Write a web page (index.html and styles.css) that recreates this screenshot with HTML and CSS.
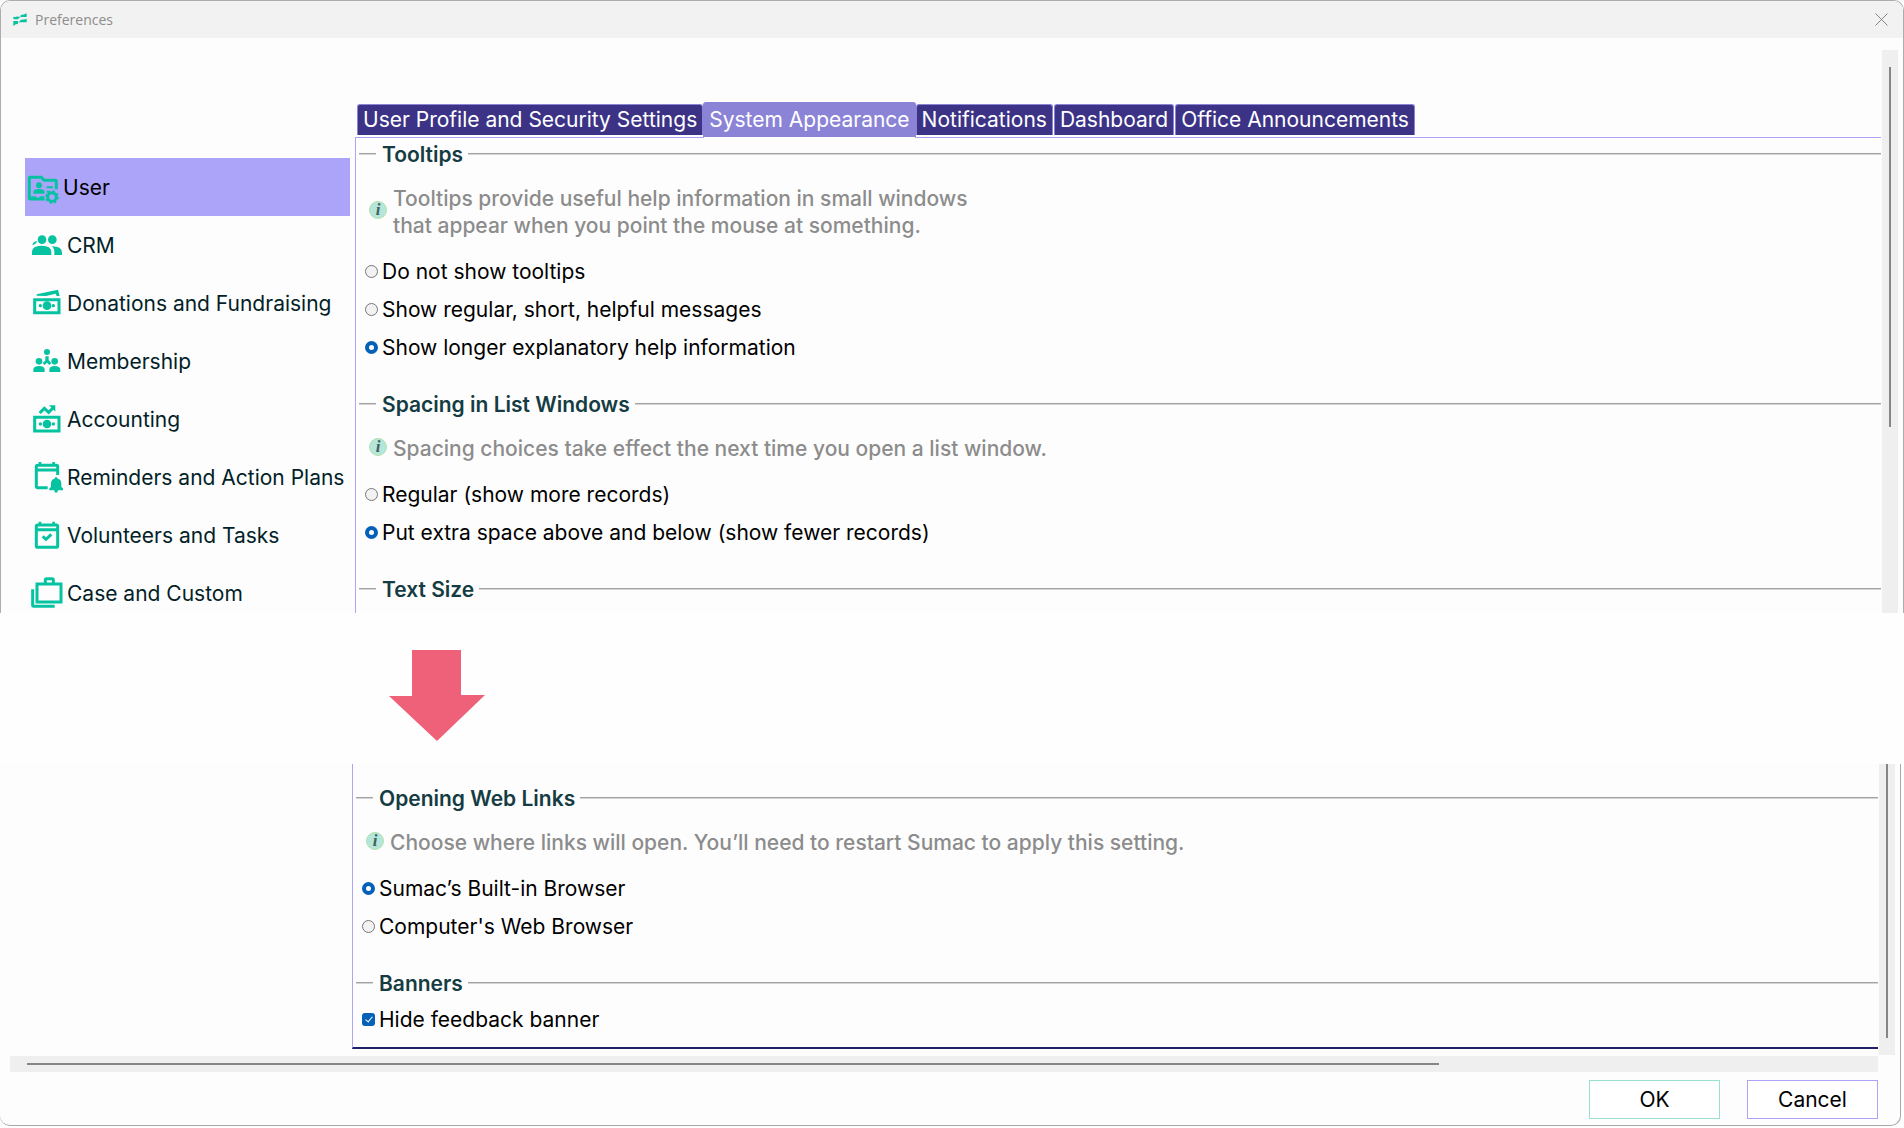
FILE: index.html
```html
<!DOCTYPE html>
<html lang="en">
<head>
<meta charset="utf-8">
<title>Preferences</title>
<link rel="stylesheet" href="styles.css">
</head>
<body>
<section class="window window-top">
  <header class="titlebar">
    <svg class="logo" viewBox="0 0 42 39" aria-hidden="true"><path d="M1 11Q8 13 15 10V19H4Q1 19 1 16ZM23 6Q33 6 41 1V12H23ZM15 11H24V12Q18 14 15 18ZM1 24H15V32Q6 33 1 39ZM23 20Q33 21 41 17V28H23ZM15 28Q20 26 23 21V28Z"/></svg>
    <h1 class="title">Preferences</h1>
    <button class="close" type="button" aria-label="Close"><svg viewBox="0 0 13 13"><path d="M.5.5l12 12M12.5.5l-12 12"/></svg></button>
  </header>
  <div class="content">
    <nav class="sidebar">
      <a class="nav-item selected" href="#user">
        <svg class="icon" viewBox="0 0 96 96"><path class="line" d="M53 84H10Q7 84 7 81V22Q7 19 10 19H43L51 28H85Q88 28 88 31V55M17 80h6v4h-6zM42 80h5v4h-5z"/><circle cx="36" cy="43" r="9"/><path d="M19 68V63Q19 54 36 54T53 63V68ZM59 46H78V52H59ZM59 59H65V65H59Z"/><circle class="gear" cx="75" cy="78" r="18"/><circle class="line" cx="75" cy="78" r="13"/></svg>
        User</a>
      <a class="nav-item" href="#crm">
        <svg class="icon" viewBox="0 0 96 96"><circle cx="33" cy="32" r="13"/><circle cx="64" cy="32" r="13"/><path d="M3 78V68Q3 50 32 50T61 68V78ZM63 52Q93 52 93 71V78H70V68Q70 58 63 52ZM4 49Q5 38 18 36Q17 43 11 46Z"/></svg>
        CRM</a>
      <a class="nav-item" href="#donations">
        <svg class="icon" viewBox="0 0 96 96"><path class="line" d="M11 38H84V77H11Z"/><circle cx="48" cy="56" r="13"/><circle cx="28" cy="56" r="5"/><circle cx="67" cy="56" r="5"/><path d="M17 26V22L81 8L86 27H77L74 20L45 27Z"/></svg>
        Donations and Fundraising</a>
      <a class="nav-item" href="#membership">
        <svg class="icon" viewBox="0 0 96 96"><circle cx="48" cy="21" r="9"/><circle cx="24" cy="49" r="10"/><circle cx="71" cy="49" r="10"/><path d="M7 81V74Q7 63 24 63T41 74V81ZM55 81V74Q55 63 71 63T88 74V81ZM43 34H53V45L61 55L55 60L48 53L41 60L35 55L43 46Z"/></svg>
        Membership</a>
      <a class="nav-item" href="#accounting">
        <svg class="icon" viewBox="0 0 96 96"><path class="line" d="M11 43H84V84H11Z"/><circle cx="48" cy="63" r="13"/><circle cx="28" cy="63" r="5"/><circle cx="67" cy="63" r="5"/><path class="line" d="M26 30L40 16L53 28L66 15"/><path d="M54 7H73V26Z"/></svg>
        Accounting</a>
      <a class="nav-item" href="#reminders">
        <svg class="icon" viewBox="0 0 96 96"><path class="line" d="M50 80H20Q16 80 16 76V17Q16 13 20 13H76Q80 13 80 17V42M16 27H80"/><path d="M23 3H31V14H23ZM64 3H72V14H64ZM55 88V82L60 78V68Q60 55 71 53Q71 48 75 48T80 53Q91 55 91 68V78L96 82V88H81Q80 96 75 96T70 88Z"/></svg>
        Reminders and Action Plans</a>
      <a class="nav-item" href="#volunteers">
        <svg class="icon" viewBox="0 0 96 96"><rect class="line" x="16" y="18" width="64" height="67" rx="4"/><path class="line" d="M16 32H80M35 52L45 61L61 46"/><path d="M23 8H31V18H23ZM64 8H72V18H64Z"/></svg>
        Volunteers and Tasks</a>
      <a class="nav-item" href="#case">
        <svg class="icon" viewBox="0 0 96 96"><path class="line" d="M18 21H90V75H18ZM5 37V85Q5 88 8 88H71M43 20V8Q43 5 47 5H63Q67 5 67 8V20"/></svg>
        Case and Custom</a>
    </nav>
    <main class="main">
      <div class="tabs" role="tablist">
        <button class="tab" role="tab" type="button">User Profile and Security Settings</button>
        <button class="tab active" role="tab" type="button" aria-selected="true">System Appearance</button>
        <button class="tab" role="tab" type="button">Notifications</button>
        <button class="tab" role="tab" type="button">Dashboard</button>
        <button class="tab" role="tab" type="button">Office Announcements</button>
      </div>
      <div class="panel panel-top">
        <fieldset class="group">
          <legend class="legend"><span>Tooltips</span></legend>
          <div class="help"><span class="info" aria-hidden="true">i</span><p>Tooltips provide useful help information in small windows<br>that appear when you point the mouse at something.</p></div>
          <label class="option"><input type="radio" name="tips">Do not show tooltips</label>
          <label class="option"><input type="radio" name="tips">Show regular, short, helpful messages</label>
          <label class="option"><input type="radio" name="tips" checked>Show longer explanatory help information</label>
        </fieldset>
        <fieldset class="group">
          <legend class="legend"><span>Spacing in List Windows</span></legend>
          <div class="help"><span class="info" aria-hidden="true">i</span><p>Spacing choices take effect the next time you open a list window.</p></div>
          <label class="option"><input type="radio" name="spacing">Regular (show more records)</label>
          <label class="option"><input type="radio" name="spacing" checked>Put extra space above and below (show fewer records)</label>
        </fieldset>
        <fieldset class="group">
          <legend class="legend"><span>Text Size</span></legend>
        </fieldset>
      </div>
    </main>
    <div class="vscroll vscroll-top"><div class="thumb"></div></div>
  </div>
</section>

<div class="skip">
  <svg class="arrow" viewBox="0 0 96 91" aria-hidden="true"><path d="M23 0H72V45H96L48 91L0 46H23Z"/></svg>
</div>

<section class="window window-bottom">
  <div class="content">
    <div class="sidebar-rest"></div>
    <main class="main">
      <div class="panel panel-bottom">
        <fieldset class="group">
          <legend class="legend"><span>Opening Web Links</span></legend>
          <div class="help"><span class="info" aria-hidden="true">i</span><p>Choose where links will open. You’ll need to restart Sumac to apply this setting.</p></div>
          <label class="option"><input type="radio" name="links" checked>Sumac’s Built-in Browser</label>
          <label class="option"><input type="radio" name="links">Computer's Web Browser</label>
        </fieldset>
        <fieldset class="group compact">
          <legend class="legend"><span>Banners</span></legend>
          <label class="option"><input type="checkbox" checked>Hide feedback banner</label>
        </fieldset>
      </div>
    </main>
    <div class="vscroll vscroll-bottom"><div class="thumb"></div></div>
  </div>
  <div class="hscroll"><div class="thumb"></div></div>
  <footer class="actions">
    <button class="action ok" type="button">OK</button>
    <button class="action cancel" type="button">Cancel</button>
  </footer>
</section>
</body>
</html>
```
FILE: styles.css
```css
:root {
  --green: #05c3a0;
  --violet: #aca4f8;
  --surface: #fdfdfd;
  --track: #efefef;
  --thumb: #868686;
}

*, ::before, ::after { box-sizing: border-box; }

body {
  margin: 0;
  background: #fefefe;
  color: #000;
  font: 21px/24px Inter, "Liberation Sans", sans-serif;
}

button, input { font: inherit; }
h1, p { margin: 0; }

.window { background: var(--surface); }

.window-top {
  border: 1px solid #adadad;
  border-bottom: 0;
  border-radius: 10px 10px 0 0;
  overflow: hidden;
}

.window-bottom {
  margin-right: 3px;
  border: solid #a8a8a8;
  border-width: 0 1px 1px 0;
  border-radius: 0 0 10px 10px;
}

.titlebar {
  display: flex;
  align-items: center;
  gap: 8px;
  height: 37px;
  padding: 0 15px 0 12px;
  background: #f2f2f2;
}

.logo { width: 14px; height: 13px; fill: var(--green); }

.title {
  flex: 1;
  color: #8c8c8c;
  font: 14px/20px "Open Sans", "Noto Sans", sans-serif;
}

.close { display: flex; padding: 0; border: 0; background: none; }
.close svg { width: 13px; height: 13px; stroke: #858585; fill: none; }

.content { display: flex; }

.sidebar {
  flex: none;
  width: 354px;
  padding: 120px 5px 0 24px;
}

.sidebar-rest { flex: none; width: 352px; }

.nav-item {
  display: flex;
  align-items: center;
  gap: 4px;
  height: 58px;
  padding: 2px 0 0 6px;
  color: #031f28;
  text-decoration: none;
  white-space: nowrap;
}

.nav-item.selected { padding-left: 2px; background: var(--violet); color: #000; }
.nav-item:last-child { margin-bottom: -9px; }

.icon { flex: none; width: 32px; height: 32px; margin-bottom: 2px; overflow: visible; fill: var(--green); }
.icon .line { fill: none; stroke: var(--green); stroke-width: 9; }
.icon .gear { fill: none; stroke: var(--green); stroke-width: 5; stroke-dasharray: 7 7; }

.main { flex: 1; min-width: 0; }
.window-top .main { padding-top: 64px; }

.tabs { display: flex; align-items: flex-start; height: 35px; padding-left: 2px; }

.tab {
  height: 31px;
  margin-top: 2px;
  padding: 0 5px;
  border: solid #8b83d6;
  border-width: 1px 1px 0;
  border-radius: 3px 3px 0 0;
  background: #3c3386;
  color: #fff;
  white-space: nowrap;
}

.tab + .tab { margin-left: 1px; }

.tab.active {
  height: 36px;
  margin: 0;
  padding-bottom: 1px;
  border-bottom: 1px solid var(--surface);
  background: #8b83d6;
  z-index: 1;
}

.tab.active + .tab { margin-left: 0; }

.panel { border-left: 1px solid var(--violet); padding-left: 3px; }
.panel-top { border-top: 1px solid var(--violet); padding-top: 4px; padding-bottom: 12px; }
.panel-bottom { padding-top: 22px; padding-bottom: 8px; border-bottom: 2px solid #211f68; }

.group { min-width: 0; margin: 0; padding: 0; border: 0; }
.group + .group { margin-top: 25px; }

.legend {
  display: flex;
  align-items: center;
  width: 100%;
  padding: 0;
  color: #153c42;
  font-weight: 600;
  line-height: 22px;
}

.legend span { padding: 2px 5px 0 6px; }

.legend::before, .legend::after {
  content: "";
  height: 2px;
  border-top: 1px solid #a2a2a2;
  background: #d5d5d5;
}

.legend::before { width: 17px; }
.legend::after { flex: 1; }

.help {
  display: flex;
  align-items: center;
  gap: 6px;
  margin: 19px 0 14px 10px;
  color: #8c8c8c;
  font-weight: 500;
  line-height: 27px;
}

.info {
  flex: none;
  width: 18px;
  height: 18px;
  margin-bottom: 4px;
  border: 1px solid #b5e0ae;
  border-radius: 50%;
  background: #b4e6da;
  color: #45605c;
  font: italic bold 17px/16px "Liberation Serif", serif;
  text-align: center;
}

.option { display: flex; align-items: center; gap: 4px; width: fit-content; height: 38px; padding-left: 6px; }
.compact .option { margin-top: 6px; }

.option input {
  appearance: none;
  width: 13px;
  height: 13px;
  margin: 0 0 1px;
  border: 1px solid #777;
  background: #f2f2f2;
}

.option input[type="radio"] { border-radius: 50%; }
.option input[type="radio"]:checked { border: 4px solid #0560b8; background: #fff; }

.option input[type="checkbox"] {
  border: 0;
  border-radius: 3px;
  background: #0560b8;
  display: grid;
  place-items: center;
}

.option input[type="checkbox"]::after {
  content: "";
  width: 4px;
  height: 7px;
  margin-bottom: 2px;
  border: solid #fff;
  border-width: 0 1px 1px 0;
  rotate: 40deg;
}

.skip { padding: 37px 0 23px 389px; }
.arrow { display: block; width: 96px; height: 91px; fill: #ef6079; }

.vscroll { flex: none; width: 16px; margin: 0 5px 0 1px; background: var(--track); }
.vscroll-top { margin-top: 12px; padding-top: 17px; }
.vscroll-bottom { margin-bottom: -6px; }
.vscroll .thumb { width: 2px; margin-left: 7px; background: var(--thumb); }
.vscroll-top .thumb { height: 66%; }
.vscroll-bottom .thumb { height: 94%; }

.hscroll { margin: 7px 22px 0 10px; padding: 7px 17px; background: var(--track); }
.hscroll .thumb { width: 77%; height: 2px; background: var(--thumb); }

.actions { display: flex; justify-content: flex-end; gap: 27px; padding: 8px 22px 6px; }

.action { width: 131px; height: 39px; padding: 0; background: #fff; color: #000; }
.ok { border: 1px solid #98e0cf; }
.cancel { border: 1px solid var(--violet); }
```
